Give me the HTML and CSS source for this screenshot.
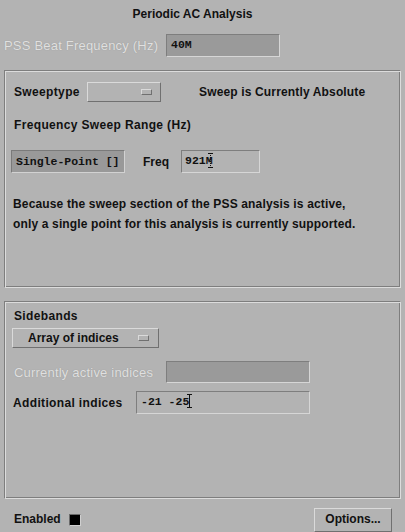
FILE: index.html
```html
<!DOCTYPE html>
<html>
<head>
<meta charset="utf-8">
<link rel="stylesheet" href="styles.css">
</head>
<body>
<div class="form">
  <div class="title">Periodic AC Analysis</div>
  <div class="row pss-row">
    <span class="label disabled pss-label">PSS Beat Frequency (Hz)</span>
    <span class="field field-dis pss-field">40M</span>
  </div>

  <div class="panel panel-sweep">
    <div class="row sweep-row">
      <span class="label wide sweep-label">Sweeptype</span>
      <span class="combo combo-sweep"><span class="combo-text"></span><span class="ind"></span></span>
      <span class="label sweep-note">Sweep is Currently Absolute</span>
    </div>
    <div class="label wide range-label">Frequency Sweep Range (Hz)</div>
    <div class="row point-row">
      <span class="toggle">Single-Point []</span>
      <span class="label freq-label">Freq</span>
      <span class="field freq-field">921<span class="caret-wrap">M<span class="caret dotted"></span></span></span>
    </div>
    <p class="note">Because the sweep section of the PSS analysis is active,<br>only a single point for this analysis is currently supported.</p>
  </div>

  <div class="panel panel-side">
    <div class="label wide side-label">Sidebands</div>
    <div class="combo combo-side"><span class="combo-text">Array of indices</span><span class="ind"></span></div>
    <div class="row active-row">
      <span class="label disabled active-label">Currently active indices</span>
      <span class="field field-dis active-field"></span>
    </div>
    <div class="row add-row">
      <span class="label wide add-label">Additional indices</span>
      <span class="field add-field">-21 -25<span class="caret"></span></span>
    </div>
  </div>

  <div class="bottom">
    <span class="label enabled-label">Enabled</span>
    <span class="check"></span>
    <span class="spacer"></span>
    <span class="button">Options...</span>
  </div>
</div>
</body>
</html>
```
FILE: styles.css
```css
html, body {
  margin: 0;
  padding: 0;
  background: #b3b3b3;
}
body {
  width: 405px;
  height: 532px;
  overflow: hidden;
  font-family: "Liberation Sans", Arial, sans-serif;
  font-size: 12px;
  font-weight: bold;
  color: #111;
}
.form {
  display: flex;
  flex-direction: column;
}
.title {
  height: 28px;
  line-height: 28px;
  text-align: center;
  padding-right: 20px;
}
.row {
  display: flex;
  align-items: center;
}
.label {
  white-space: nowrap;
}
.wide {
  letter-spacing: 0.35px;
}
.disabled {
  color: #e0e0e0;
  font-weight: normal;
  font-size: 13px;
  letter-spacing: 0.2px;
  text-shadow: 0 0 1px #8e8e8e;
}
.pss-row {
  margin-top: 6px;
  padding-left: 4px;
}
.pss-label {
  width: 162px;
}
.field {
  box-sizing: border-box;
  height: 23px;
  border: 1px solid;
  border-color: #7e7e7e #d6d6d6 #d6d6d6 #7e7e7e;
  font-family: "Liberation Mono", "DejaVu Sans Mono", monospace;
  font-size: 11.5px;
  font-weight: bold;
  padding: 2px 0 0 4px;
  line-height: 15px;
  white-space: nowrap;
}
.field-dis {
  background: #9a9a9a;
}
.pss-field {
  width: 114px;
}
.panel {
  box-sizing: border-box;
  margin: 0 4px;
  border: 1px solid;
  border-color: #7e7e7e #dcdcdc #dcdcdc #7e7e7e;
  box-shadow: inset 1px 1px 0 #dcdcdc, inset -1px -1px 0 #7e7e7e;
}
.panel-sweep {
  margin-top: 13px;
  height: 218px;
  padding: 11px 0 0 0;
}
.sweep-row {
  height: 20px;
}
.sweep-label {
  width: 82px;
  padding-left: 9px;
  box-sizing: border-box;
}
.combo {
  box-sizing: border-box;
  display: flex;
  align-items: center;
  border: 1px solid;
  border-color: #dadada #707070 #707070 #dadada;
  height: 20px;
}
.combo-sweep {
  width: 74px;
  justify-content: flex-end;
  padding-right: 8px;
}
.ind {
  box-sizing: border-box;
  width: 11px;
  height: 6px;
  border: 1px solid;
  border-color: #dadada #707070 #707070 #dadada;
}
.sweep-note {
  margin-left: 38px;
  letter-spacing: 0.15px;
}
.range-label {
  margin-top: 13px;
  padding-left: 9px;
  height: 20px;
  line-height: 20px;
}
.point-row {
  margin-top: 15px;
  padding-left: 6px;
}
.toggle {
  box-sizing: border-box;
  width: 114px;
  height: 23px;
  background: #999;
  border: 1px solid;
  border-color: #7a7a7a #d2d2d2 #d2d2d2 #7a7a7a;
  font-family: "Liberation Mono", "DejaVu Sans Mono", monospace;
  font-size: 11.5px;
  font-weight: bold;
  padding: 4px 0 0 4px;
  white-space: nowrap;
}
.freq-label {
  margin-left: 18px;
  width: 38px;
}
.freq-field {
  width: 79px;
  padding-left: 3px;
}
.caret-wrap {
  position: relative;
}
.caret {
  display: inline-block;
  width: 1px;
  height: 14px;
  background: #111;
  vertical-align: -3px;
  position: relative;
}
.caret::before, .caret::after {
  content: "";
  position: absolute;
  left: -2px;
  width: 5px;
  height: 1px;
  background: #111;
}
.caret::before { top: 0; }
.caret::after { bottom: 0; }
.caret.dotted {
  position: absolute;
  left: 4px;
  top: -1px;
  height: 15px;
  background: repeating-linear-gradient(#111 0 1px, transparent 1px 2px);
}
.note {
  margin: 21px 0 0 8px;
  line-height: 20px;
  letter-spacing: 0.15px;
}
.panel-side {
  margin-top: 13px;
  height: 198px;
  padding: 4px 0 0 0;
}
.side-label {
  padding-left: 9px;
  height: 20px;
  line-height: 20px;
}
.combo-side {
  width: 147px;
  margin: 2px 0 0 7px;
  padding: 0 9px 0 15px;
  justify-content: space-between;
}
.active-row {
  margin-top: 13px;
}
.active-label {
  width: 161px;
  padding-left: 9px;
  box-sizing: border-box;
}
.active-field {
  width: 144px;
  height: 22px;
}
.add-row {
  margin-top: 8px;
}
.add-label {
  width: 131px;
  padding-left: 8px;
  box-sizing: border-box;
}
.add-field {
  width: 174px;
  padding-left: 4px;
}
.bottom {
  display: flex;
  align-items: flex-start;
  height: 34px;
}
.enabled-label {
  margin: 13px 0 0 14px;
  line-height: 14px;
}
.check {
  box-sizing: border-box;
  width: 12px;
  height: 12px;
  background: #000;
  border: 1px solid;
  border-color: #6a6a6a #d0d0d0 #d0d0d0 #6a6a6a;
  margin: 15px 0 0 8px;
}
.spacer {
  flex: 1;
}
.button {
  box-sizing: border-box;
  width: 78px;
  height: 24px;
  margin: 9px 13px 0 0;
  border: 1px solid;
  border-color: #dadada #707070 #707070 #dadada;
  text-align: center;
  line-height: 21px;
}
```
